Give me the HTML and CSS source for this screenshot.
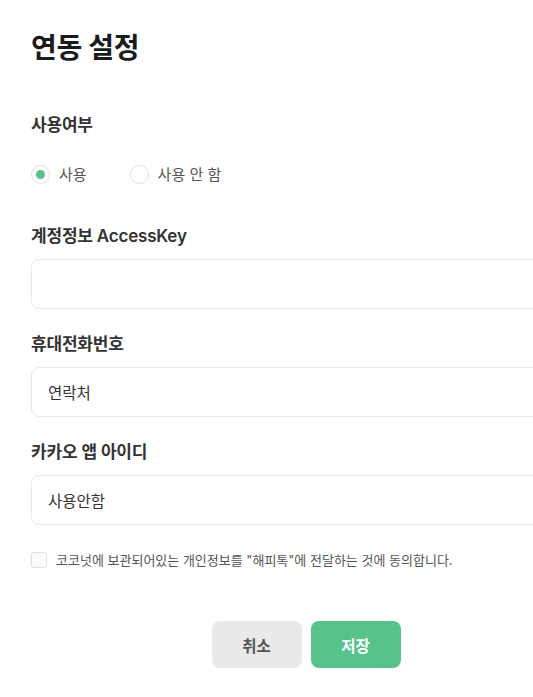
FILE: index.html
```html
<!DOCTYPE html>
<html lang="ko">
<head>
<meta charset="utf-8">
<title>연동 설정</title>
<link rel="stylesheet" href="styles.css">
</head>
<body>
<div class="panel">
  <h1 class="title">연동 설정</h1>

  <section class="field">
    <div class="label">사용여부</div>
    <div class="radios">
      <label class="radio"><span class="dot checked"></span><span>사용</span></label>
      <label class="radio"><span class="dot"></span><span>사용 안 함</span></label>
    </div>
  </section>

  <section class="field">
    <div class="label">계정정보 AccessKey</div>
    <div class="input"></div>
  </section>

  <section class="field">
    <div class="label">휴대전화번호</div>
    <div class="input">연락처</div>
  </section>

  <section class="field">
    <div class="label">카카오 앱 아이디</div>
    <div class="input">사용안함</div>
  </section>

  <label class="agree"><span class="box"></span><span>코코넛에 보관되어있는 개인정보를 "해피톡"에 전달하는 것에 동의합니다.</span></label>

  <div class="actions">
    <button class="btn cancel">취소</button>
    <button class="btn save">저장</button>
  </div>
</div>
</body>
</html>
```

FILE: styles.css
```css
html { overflow: hidden; background: #fff; }
body {
  margin: 0;
  font-family: Inter, "Noto Sans CJK KR", sans-serif;
  color: #333;
}
.panel {
  width: 550px;
  padding: 30px 31px 0 31px;
}
.title {
  margin: 0 0 48px 0;
  font-size: 28px;
  line-height: 36px;
  font-weight: 700;
  color: #1b1b1b;
  letter-spacing: -0.3px;
}
.field { margin-bottom: 24px; }
.field:first-of-type { margin-bottom: 41px; }
.label {
  font-size: 17px;
  line-height: 22px;
  font-weight: 600;
  color: #333;
  margin-bottom: 12px;
  letter-spacing: -0.2px;
}
.radios {
  display: flex;
  gap: 43px;
  margin-top: 29px;
}
.radio {
  display: flex;
  align-items: center;
  gap: 9px;
  font-size: 15px;
  line-height: 18px;
  color: #555;
}
.dot {
  box-sizing: border-box;
  width: 19px;
  height: 19px;
  border: 1.5px solid #e1e2e6;
  border-radius: 50%;
  display: flex;
  align-items: center;
  justify-content: center;
  background: #fff;
}
.dot.checked::after {
  content: "";
  width: 9px;
  height: 9px;
  border-radius: 50%;
  background: #57c08b;
}
.input {
  box-sizing: border-box;
  height: 50px;
  border: 1px solid #e8e8e8;
  border-radius: 8px;
  padding: 0 16px;
  display: flex;
  align-items: center;
  font-size: 15.5px;
  color: #333;
}
.agree {
  display: flex;
  align-items: center;
  gap: 9px;
  margin-top: 25px;
  font-size: 13px;
  line-height: 20px;
  color: #555;
}
.box {
  box-sizing: border-box;
  width: 16px;
  height: 16px;
  border: 1.5px solid #e1e2e6;
  border-radius: 3px;
  background: #fafafb;
}
.actions {
  display: flex;
  justify-content: center;
  gap: 9px;
  margin-top: 51px;
}
.btn {
  width: 90px;
  height: 47px;
  border: none;
  border-radius: 8px;
  font-family: inherit;
  font-size: 15.5px;
  font-weight: 700;
}
.cancel { background: #e8e9eb; color: #555; }
.save { background: #58c28d; color: #fff; }
```
